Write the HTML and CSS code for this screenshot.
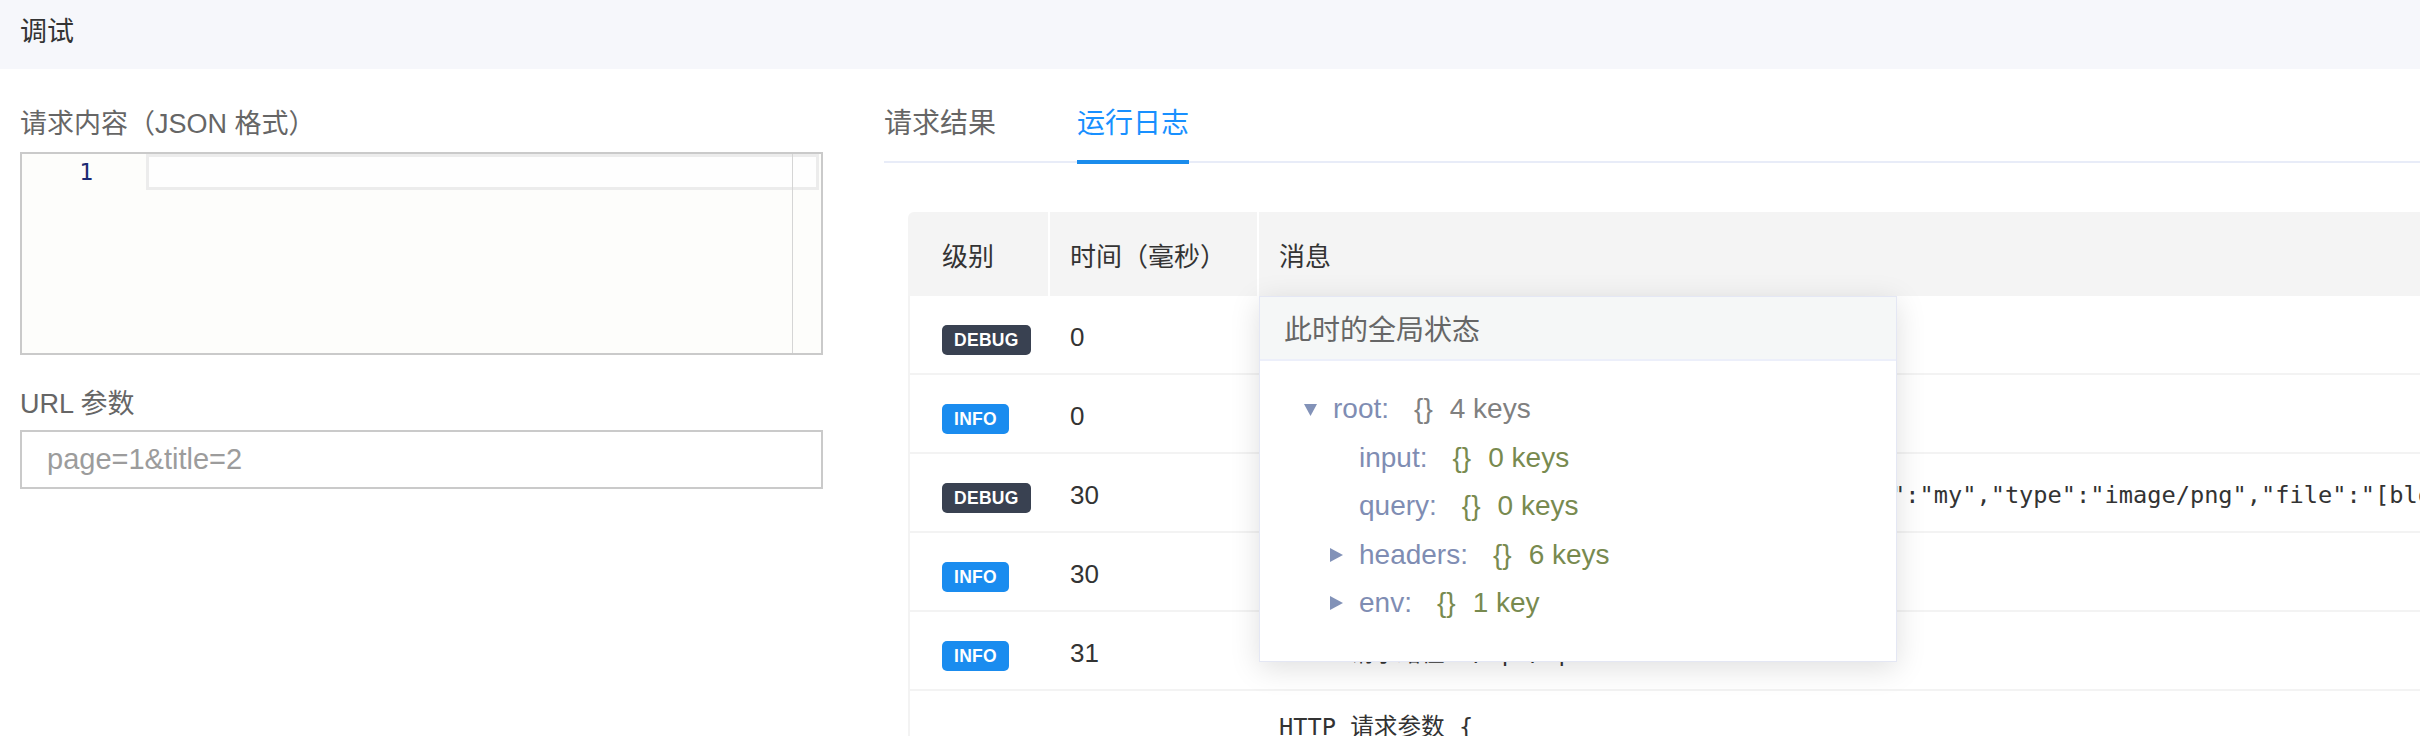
FILE: index.html
```html
<!DOCTYPE html>
<html lang="zh-CN">
<head>
<meta charset="utf-8">
<title>调试</title>
<link rel="stylesheet" href="styles.css">
</head>
<body>
<div class="topbar">调试</div>
<div class="main">
  <section class="left">
    <div class="field-label">请求内容（JSON 格式）</div>
    <div class="editor">
      <div class="gutter"><div class="line-no">1</div></div>
      <div class="code">
        <div class="active-line"></div>
        <div class="print-margin"></div>
      </div>
    </div>
    <div class="field-label url-label">URL 参数</div>
    <input class="url-input" type="text" placeholder="page=1&amp;title=2">
  </section>
  <section class="right">
    <div class="tabs">
      <div class="tab">请求结果</div>
      <div class="tab active">运行日志</div>
    </div>
    <div class="log-table">
      <div class="thead">
        <div class="th">级别</div>
        <div class="th">时间（毫秒）</div>
        <div class="th">消息</div>
      </div>
      <div class="tbody">
        <div class="tr">
          <div class="td badge-cell"><span class="badge debug">DEBUG</span></div>
          <div class="td">0</div>
          <div class="td mono"></div>
        </div>
        <div class="tr">
          <div class="td badge-cell"><span class="badge info">INFO</span></div>
          <div class="td">0</div>
          <div class="td mono"></div>
        </div>
        <div class="tr">
          <div class="td badge-cell"><span class="badge debug">DEBUG</span></div>
          <div class="td">30</div>
          <div class="td mono">files = [{"fieldname":"file","original_name":"my","type":"image/png","file":"[blob]"}]</div>
        </div>
        <div class="tr">
          <div class="td badge-cell"><span class="badge info">INFO</span></div>
          <div class="td">30</div>
          <div class="td mono"></div>
        </div>
        <div class="tr">
          <div class="td badge-cell"><span class="badge info">INFO</span></div>
          <div class="td">31</div>
          <div class="td mono">HTTP 请求路径: /api/upload</div>
        </div>
        <div class="tr multi">
          <div class="td"></div>
          <div class="td"></div>
          <div class="td mono pre">HTTP 请求参数 {
  "page": "1",
  "title": "2"
}</div>
        </div>
      </div>
      <div class="popover">
        <div class="pop-head">此时的全局状态</div>
        <div class="tree">
          <div class="node">
            <span class="arrow"><svg width="13" height="13" viewBox="0 0 13 13"><path d="M0 1H13L6.5 13Z" fill="#8292b8"/></svg></span>
            <span class="key">root:</span><span class="brace gray">{}</span><span class="count gray">4 keys</span>
          </div>
          <div class="node child">
            <span class="arrow"></span>
            <span class="key">input:</span><span class="brace green">{}</span><span class="count green">0 keys</span>
          </div>
          <div class="node child">
            <span class="arrow"></span>
            <span class="key">query:</span><span class="brace green">{}</span><span class="count green">0 keys</span>
          </div>
          <div class="node child">
            <span class="arrow"><svg width="13" height="14" viewBox="0 0 13 14"><path d="M0 0L13 7L0 14Z" fill="#8292b8"/></svg></span>
            <span class="key">headers:</span><span class="brace green">{}</span><span class="count green">6 keys</span>
          </div>
          <div class="node child">
            <span class="arrow"><svg width="13" height="14" viewBox="0 0 13 14"><path d="M0 0L13 7L0 14Z" fill="#8292b8"/></svg></span>
            <span class="key">env:</span><span class="brace green">{}</span><span class="count green">1 key</span>
          </div>
        </div>
      </div>
    </div>
  </section>
</div>
</body>
</html>
```
FILE: styles.css
```css
* { box-sizing: border-box; }
html, body { margin: 0; padding: 0; }
body {
  width: 2420px;
  height: 736px;
  overflow: hidden;
  background: #fff;
  color: #333;
  font-family: "Liberation Sans", "Noto Sans CJK SC", sans-serif;
  font-size: 26px;
}

.topbar {
  height: 69px;
  background: #f6f7fb;
  padding: 14px 0 0 20px;
  line-height: 36px;
  font-size: 27px;
  color: #333;
}

.main {
  display: flex;
  padding-left: 20px;
}

/* left column */
.left {
  width: 803px;
  flex: none;
  padding-top: 37px;
}
.field-label {
  line-height: 36px;
  font-size: 27px;
  color: #666;
  margin-bottom: 10px;
}
.url-label {
  margin-top: 31px;
  margin-bottom: 8px;
}
.editor {
  display: flex;
  height: 203px;
  border: 2px solid #cacaca;
  background: #fdfdfb;
}
.gutter {
  width: 124px;
  flex: none;
  padding-right: 53px;
  text-align: right;
}
.line-no {
  font-family: "DejaVu Sans Mono", monospace;
  font-size: 23px;
  line-height: 36px;
  color: #1b2a72;
}
.code {
  flex: 1;
  position: relative;
}
.active-line {
  height: 36px;
  margin-right: 2px;
  border: 3px solid #ececec;
  background: #fefefe;
}
.print-margin {
  position: absolute;
  top: 0;
  bottom: 0;
  left: 646px;
  width: 1px;
  background: #d5d5d5;
}
.url-input {
  display: block;
  width: 100%;
  height: 59px;
  margin: 0;
  border: 2px solid #cacaca;
  padding: 0 0 0 25px;
  font-family: "Liberation Sans", "Noto Sans CJK SC", sans-serif;
  font-size: 29px;
  color: #333;
  background: #fff;
  outline: none;
}
.url-input::placeholder { color: #9c9c9c; }

/* right column */
.right {
  flex: 1;
  min-width: 0;
  margin-left: 61px;
}
.tabs {
  display: flex;
  gap: 81px;
  border-bottom: 2px solid #e8ecf8;
}
.tab {
  position: relative;
  padding: 37px 0 19px;
  line-height: 36px;
  font-size: 28px;
  color: #666;
}
.tab.active { color: #1890ff; }
.tab.active::after {
  content: "";
  position: absolute;
  left: 0;
  right: 0;
  bottom: -3px;
  height: 4px;
  background: #1a8cec;
}

.log-table {
  position: relative;
  margin: 49px 0 0 24px;
}
.thead {
  display: grid;
  grid-template-columns: 140px 207px 1fr;
  column-gap: 2px;
  height: 84px;
}
.th {
  display: flex;
  align-items: center;
  padding-left: 20px;
  background: #f4f4f4;
  color: #333;
}
.th:first-child {
  padding-left: 34px;
  border-top-left-radius: 6px;
}
.tbody { border-left: 2px solid #f3f3f3; }
.tr {
  display: grid;
  grid-template-columns: 138px 207px 1fr;
  column-gap: 2px;
  height: 79px;
  padding-top: 5px;
  align-items: center;
  border-bottom: 2px solid #f3f3f3;
}
.tr.multi {
  height: auto;
  align-items: start;
  padding-top: 22px;
  border-bottom: none;
}
.td {
  padding-left: 20px;
  white-space: nowrap;
  overflow: hidden;
  line-height: 30px;
}
.td:first-child { padding-left: 32px; }
.td.badge-cell { padding-top: 4px; }
.mono {
  font-family: "DejaVu Sans Mono", "Noto Sans CJK SC", monospace;
  font-size: 23.65px;
  color: #333;
  line-height: 28px;
}
.pre { white-space: pre; }

.badge {
  display: inline-block;
  vertical-align: middle;
  height: 30px;
  line-height: 30px;
  padding: 0 12px;
  border-radius: 5px;
  color: #fff;
  font-weight: bold;
  font-size: 17.5px;
  letter-spacing: 0.3px;
}
.badge.debug { background: #394151; }
.badge.info { background: #1a8cef; }

/* popover */
.popover {
  position: absolute;
  left: 351px;
  top: 84px;
  width: 638px;
  height: 366px;
  background: #fff;
  border: 1px solid #e4e7f4;
  box-shadow: 0 6px 28px rgba(0, 0, 0, 0.13);
  z-index: 2;
}
.pop-head {
  display: flex;
  align-items: center;
  height: 64px;
  padding-left: 24px;
  background: #f5f7f7;
  border-bottom: 2px solid #eceffa;
  font-size: 28px;
  color: #666;
}
.tree {
  padding: 24px 0 0 44px;
  font-size: 28px;
}
.node {
  display: flex;
  align-items: center;
  height: 48.5px;
}
.node.child { padding-left: 26px; }
.arrow {
  width: 29px;
  flex: none;
  display: flex;
  align-items: center;
}
.key {
  color: #7f8db3;
  margin-right: 25px;
}
.brace { margin-right: 17px; }
.gray { color: #808080; }
.green { color: #788a4f; }
```
